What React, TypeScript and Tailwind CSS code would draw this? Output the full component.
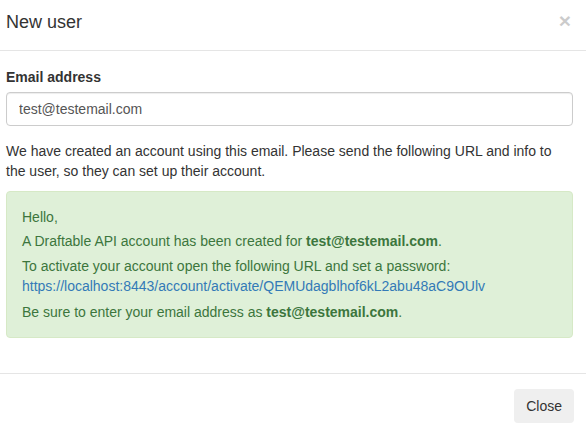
export default function App() {
  const email = "test@testemail.com";
  const url = "https://localhost:8443/account/activate/QEMUdagblhof6kL2abu48aC9OUlv";

  return (
    <div className="w-[586px] h-[433px] overflow-hidden bg-white text-[14px] leading-[20px] text-[#333] font-['Liberation_Sans',Arial,sans-serif]">
      {/* Header */}
      <div className="flex items-center justify-between pt-[9px] pb-[15px] pl-[6px] pr-[13px] border-b border-[#e5e5e5]">
        <h4 className="text-[18px] leading-[26px] font-normal text-[#333]">New user</h4>
        <button type="button" className="text-[21px] leading-none font-bold text-black opacity-20 -mt-[4px] mr-[2px]">
          ×
        </button>
      </div>

      {/* Body */}
      <div className="pt-[16px] pb-[15px] pl-[6px] pr-[13px]">
        <div className="mb-[15px]">
          <label className="block font-bold mb-[5px]">Email address</label>
          <input
            type="text"
            readOnly
            value={email}
            className="block w-full h-[34px] px-[12px] py-[6px] text-[14px] text-[#555] border border-[#ccc] rounded-[4px] shadow-[inset_0_1px_1px_rgba(0,0,0,0.075)] outline-none"
          />
        </div>

        <p className="mb-[10px]">
          We have created an account using this email. Please send the following URL and info to the user, so they can
          set up their account.
        </p>

        <div className="p-[15px] mb-[20px] border border-[#d6e9c6] rounded-[4px] bg-[#dff0d8] text-[#3c763d]">
          <p className="mb-[4px]">Hello,</p>
          <p className="mb-[5px]">
            A Draftable API account has been created for <b>{email}</b>.
          </p>
          <p className="mb-[6px]">
            To activate your account open the following URL and set a password:
            <br />
            <a href="#" className="text-[#337ab7]">
              {url}
            </a>
          </p>
          <p>
            Be sure to enter your email address as <b>{email}</b>.
          </p>
        </div>
      </div>

      {/* Footer */}
      <div className="flex justify-end pt-[15px] pl-[6px] pr-[12px] border-t border-[#e5e5e5]">
        <button type="button" className="h-[34px] px-[12px] rounded-[4px] bg-[#efefef] text-[#333] text-[14px]">
          Close
        </button>
      </div>
    </div>
  );
}
